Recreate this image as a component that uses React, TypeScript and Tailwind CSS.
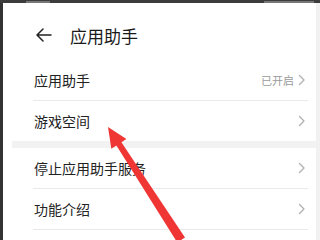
import React from "react";

const font = { fontFamily: '"Noto Sans CJK SC", "Noto Sans", sans-serif' };

function Chevron() {
  return (
    <svg width="8" height="12" viewBox="0 0 8 12" className="shrink-0">
      <path d="M1.5 1.5 L6 6 L1.5 10.5" fill="none" stroke="#b0b0b0" strokeWidth="1.3" strokeLinecap="round" strokeLinejoin="round" />
    </svg>
  );
}

function Row({ label, value, divider = true }: { label: string; value?: string; divider?: boolean }) {
  return (
    <div className="flex flex-col">
      <div className="h-[40px] flex items-center pl-[31px] pr-[10px]">
        <span className="text-[14px] text-[#222] flex-1 leading-none">{label}</span>
        {value && <span className="text-[11px] text-[#9a9a9a] mr-[4px] leading-none">{value}</span>}
        <Chevron />
      </div>
      {divider && <div className="h-px bg-[#e9e9e9] ml-[30px] mr-[8px]" />}
    </div>
  );
}

export default function App() {
  return (
    <div className="relative w-[320px] h-[240px] overflow-hidden bg-white flex flex-col" style={font}>
      <div className="h-[3px] bg-[#3c3c3c] flex shrink-0">
        <div className="ml-[26px] mt-px w-[24px] h-[2px] bg-[#777]" />
        <div className="ml-auto mr-[6px] mt-px w-[50px] h-[2px] bg-[#777]" />
      </div>
      <div className="flex flex-1">
        <div className="w-[3px] bg-[#333] shrink-0" />
        <div className="flex-1 flex flex-col">
          <div className="h-[57px] flex items-center pl-[33px] pt-[7px]">
            <svg width="16" height="16" viewBox="0 0 16 16" className="shrink-0">
              <path d="M1 8 H15 M7 2 L1 8 L7 14" fill="none" stroke="#222" strokeWidth="1.5" strokeLinecap="round" strokeLinejoin="round" />
            </svg>
            <span className="ml-[18px] text-[17px] text-[#1a1a1a] leading-none">应用助手</span>
          </div>
          <Row label="应用助手" value="已开启" />
          <Row label="游戏空间" divider={false} />
          <div className="h-[7px] bg-[#f2f2f2] ml-[9px] shrink-0" />
          <Row label="停止应用助手服务" />
          <Row label="功能介绍" />
        </div>
        <div className="w-[4px] bg-[#f1f1f1] shrink-0" />
      </div>
      <svg className="absolute left-0 top-0" width="320" height="240" viewBox="0 0 320 240">
        <polygon
          points="108,127 126.4,138.9 121.4,142.2 185,237.6 177.2,242.4 116.4,145.4 111.3,148.7"
          fill="#f03535"
        />
      </svg>
    </div>
  );
}
